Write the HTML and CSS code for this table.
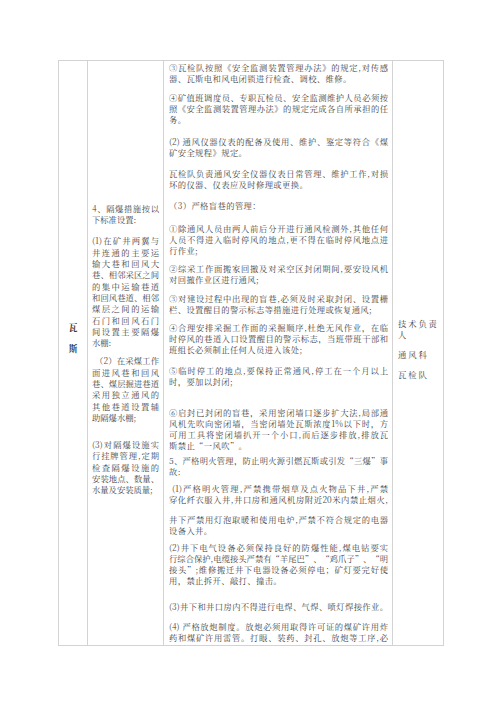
FILE: index.html
```html
<!DOCTYPE html>
<html lang="zh-CN">
<head>
<meta charset="utf-8">
<title>瓦斯</title>
<link rel="stylesheet" href="styles.css">
</head>
<body>
<div class="page">
<table class="grid">
<colgroup>
<col class="c1"><col class="c2"><col class="c3"><col class="c4">
</colgroup>
<tr>
<td class="cat"><span class="catch">瓦</span><span class="catch">斯</span></td>
<td class="item">
<p class="q"><span class="j">4、隔爆措施按以</span><span class="e">下标准设置:</span></p>
<p class="q g10"><span class="j">(1)在矿井两翼与</span><span class="j">井连通的主要运</span><span class="j">输大巷和回风大</span><span class="j">巷、相邻采区之间</span><span class="j">的集中运输巷道</span><span class="j">和回风巷道、相邻</span><span class="j">煤层之间的运输</span><span class="j">石门和回风石门</span><span class="j">间设置主要隔爆</span><span class="e">水棚:</span></p>
<p class="q g7"><span class="j ind">（2）在采煤工作</span><span class="j">面进风巷和回风</span><span class="j">巷、煤层掘进巷道</span><span class="j">采用独立通风的</span><span class="j">其他巷道设置辅</span><span class="e">助隔爆水棚;</span></p>
<p class="q g16"><span class="j">(3)对隔爆设施实</span><span class="j">行挂牌管理,定期</span><span class="j">检查隔爆设施的</span><span class="j">安装地点、数量、</span><span class="e">水量及安装质量;</span></p>
</td>
<td class="main">
<p class="p"><span class="j">③瓦检队按照《安全监测装置管理办法》的规定,对传感</span><span class="e">器、瓦斯电和风电闭锁进行检查、调校、维修。</span></p>
<p class="p g8"><span class="j">④矿值班调度员、专职瓦检员、安全监测维护人员必须按</span><span class="j">照《安全监测装置管理办法》的规定完成各自所承担的任</span><span class="e">务。</span></p>
<p class="p g11"><span class="j">(2) 通风仪器仪表的配备及使用、维护、鉴定等符合《煤</span><span class="e">矿安全规程》规定。</span></p>
<p class="p g10"><span class="j">瓦检队负责通风安全仪器仪表日常管理、维护工作,对损</span><span class="e">坏的仪器、仪表应及时修理或更换。</span></p>
<p class="p g10"><span class="e">（3）严格盲巷的管理：</span></p>
<p class="p g12"><span class="j">①除通风人员由两人前后分开进行通风检测外,其他任何</span><span class="j">人员不得进入临时停风的地点,更不得在临时停风地点进</span><span class="e">行作业;</span></p>
<p class="p g7"><span class="j">②综采工作面搬家回撤及对采空区封闭期间,要安设风机</span><span class="e">对回撤作业区进行通风;</span></p>
<p class="p g8"><span class="j">③对建设过程中出现的盲巷,必须及时采取封闭、设置栅</span><span class="e">栏、设置醒目的警示标志等措施进行处理或恢复通风;</span></p>
<p class="p g7"><span class="j">④合理安排采掘工作面的采掘顺序,杜绝无风作业，在临</span><span class="j">时停风的巷道入口设置醒目的警示标志，当班带班干部和</span><span class="e">班组长必须制止任何人员进入该处;</span></p>
<p class="p g10"><span class="j">⑤临时停工的地点,要保持正常通风,停工在一个月以上</span><span class="e">时，要加以封闭;</span></p>
<p class="p g20"><span class="j">⑥启封已封闭的盲巷，采用密闭墙口逐步扩大法,局部通</span><span class="j">风机先吹向密闭墙，当密闭墙处瓦斯浓度1%以下时，方</span><span class="j">可用工具将密闭墙扒开一个小口,而后逐步排放,排放瓦</span><span class="e">斯禁止“一风吹”。</span></p>
<p class="p g4"><span class="j">5、严格明火管理，防止明火源引燃瓦斯或引发“三爆”事</span><span class="e">故:</span></p>
<p class="p g6"><span class="j ind">(1)严格明火管理,严禁携带烟草及点火物品下井,严禁</span><span class="j">穿化纤衣服入井,井口房和通风机房附近20米内禁止烟火,</span><span class="j g9">井下严禁用灯泡取暖和使用电炉,严禁不符合规定的电器</span><span class="e">设备入井。</span></p>
<p class="p g6"><span class="j">(2)井下电气设备必须保持良好的防爆性能,煤电钻要实</span><span class="j">行综合保护,电缆接头严禁有“羊尾巴”、“鸡爪子”、“明</span><span class="j">接头”;维修搬迁井下电器设备必须停电；矿灯要完好使</span><span class="e">用，禁止拆开、敲打、撞击。</span></p>
<p class="p g15"><span class="j">(3)井下和井口房内不得进行电焊、气焊、喷灯焊接作业。</span></p>
<p class="p g9"><span class="j">(4) 严格放炮制度。放炮必须用取得许可证的煤矿许用炸</span><span class="j">药和煤矿许用雷管。打眼、装药、封孔、放炮等工序,必</span></p>
</td>
<td class="who">
<p class="w"><span class="wl">技术负责</span><span class="wl">人</span></p>
<p class="w g9"><span class="wl">通风科</span></p>
<p class="w g9"><span class="wl">瓦检队</span></p>
</td>
</tr>
</table>
</div>
</body>
</html>
```
FILE: styles.css
```css
html, body {
  margin: 0;
  padding: 0;
  background: #ffffff;
}
body {
  width: 500px;
  height: 707px;
  overflow: hidden;
  font-family: "Noto Serif CJK SC", "Noto Sans CJK SC", serif;
  font-size: 8.3px;
  color: #444444;
}
.page {
  padding: 60px 0 0 58px;
}
.grid {
  border-collapse: collapse;
  table-layout: fixed;
  width: 385px;
}
.c1 { width: 29px; }
.c2 { width: 76px; }
.c3 { width: 229px; }
.c4 { width: 51px; }
.grid td {
  border: 1px solid #d3d3d3;
  padding: 0;
  vertical-align: middle;
}
p {
  margin: 0;
}
.j, .e, .wl, .catch {
  display: block;
}
.j {
  text-align: justify;
  text-align-last: justify;
}
.e {
  text-align: left;
}
.ind {
  padding-left: 3px;
}
/* category column */
.cat {
  text-align: center;
  padding-bottom: 29px !important;
}
.catch {
  font-weight: 700;
  font-size: 8.6px;
  line-height: 21px;
  color: #333333;
}
/* measures column */
.item {
  padding: 0 4px 7px 4px !important;
}
.q {
  line-height: 11.3px;
}
/* main column */
.main {
  vertical-align: top !important;
  padding: 1px 4px 1.5px 5px !important;
}
.p {
  line-height: 11px;
  letter-spacing: 0.4px;
}
.p .j {
  letter-spacing: 0;
}
/* responsible column */
.who {
  padding: 0 2px 8px 5px !important;
}
.w {
  line-height: 11px;
  letter-spacing: 1.9px;
}
.g4 { margin-top: 4px; }
.g6 { margin-top: 6px; }
.g7 { margin-top: 7px; }
.g8 { margin-top: 8px; }
.g9 { margin-top: 9px; }
.g10 { margin-top: 10px; }
.g11 { margin-top: 11px; }
.g12 { margin-top: 12px; }
.g15 { margin-top: 15px; }
.g16 { margin-top: 16px; }
.g20 { margin-top: 20px; }
```
